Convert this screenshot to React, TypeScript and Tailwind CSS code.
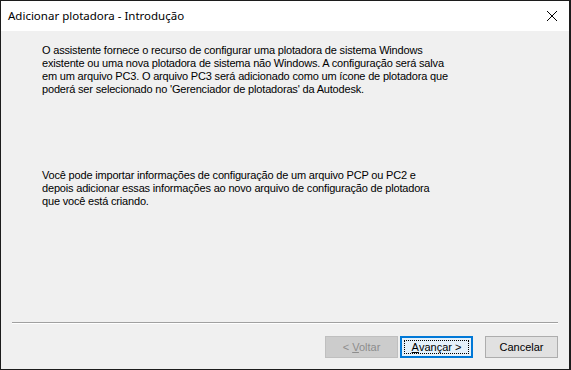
import React from "react";

export default function App() {
  return (
    <div className="w-[571px] h-[370px] border border-r-2 border-[#1c1c1c] bg-[#f0f0f0] flex flex-col overflow-hidden">
      <div className="h-[30px] bg-white flex items-center justify-between shrink-0">
        <span
          className="pl-[7px] text-[11.5px] text-black leading-none"
          style={{ fontFamily: '"Noto Sans", "Open Sans", sans-serif' }}
        >
          Adicionar plotadora - Introdução
        </span>
        <svg width="12" height="12" viewBox="0 0 12 12" className="mr-[11px]">
          <path d="M1 1 L11 11 M11 1 L1 11" stroke="#000" strokeWidth="1" />
        </svg>
      </div>
      <div
        className="flex-1 flex flex-col text-[11px] leading-[13px] text-black tracking-[-0.18px]"
        style={{ fontFamily: '"Liberation Sans", Arial, sans-serif' }}
      >
        <div className="pl-[41px] pt-[13px] whitespace-nowrap">
          O assistente fornece o recurso de configurar uma plotadora de sistema Windows
          <br />
          existente ou uma nova plotadora de sistema não Windows. A configuração será salva
          <br />
          em um arquivo PC3. O arquivo PC3 será adicionado como um ícone de plotadora que
          <br />
          poderá ser selecionado no 'Gerenciador de plotadoras' da Autodesk.
        </div>
        <div className="pl-[41px] pt-[73px] whitespace-nowrap">
          Você pode importar informações de configuração de um arquivo PCP ou PC2 e
          <br />
          depois adicionar essas informações ao novo arquivo de configuração de plotadora
          <br />
          que você está criando.
        </div>
        <div className="flex-1" />
        <div className="ml-[11px] mr-[11px] h-[2px] border-t border-[#a0a0a0] border-b border-b-white" />
        <div className="flex justify-end mt-[12px] mb-[11px] mr-[11px] tracking-normal">
          <button className="w-[73px] h-[22px] bg-[#cccccc] border border-[#bfbfbf] text-[#8d8d8d]">
            &lt; <span className="underline">V</span>oltar
          </button>
          <button className="ml-[2px] w-[73px] h-[22px] bg-[#e5f1fb] border-2 border-[#0078d7] text-black flex items-center justify-center">
            <span className="border border-dotted border-black w-[65px] h-[14px] flex items-center justify-center leading-none">
              <span className="underline">A</span>vançar &gt;
            </span>
          </button>
          <button className="ml-[12px] w-[73px] h-[22px] bg-[#e1e1e1] border border-[#adadad] text-black">
            Cancelar
          </button>
        </div>
      </div>
    </div>
  );
}
